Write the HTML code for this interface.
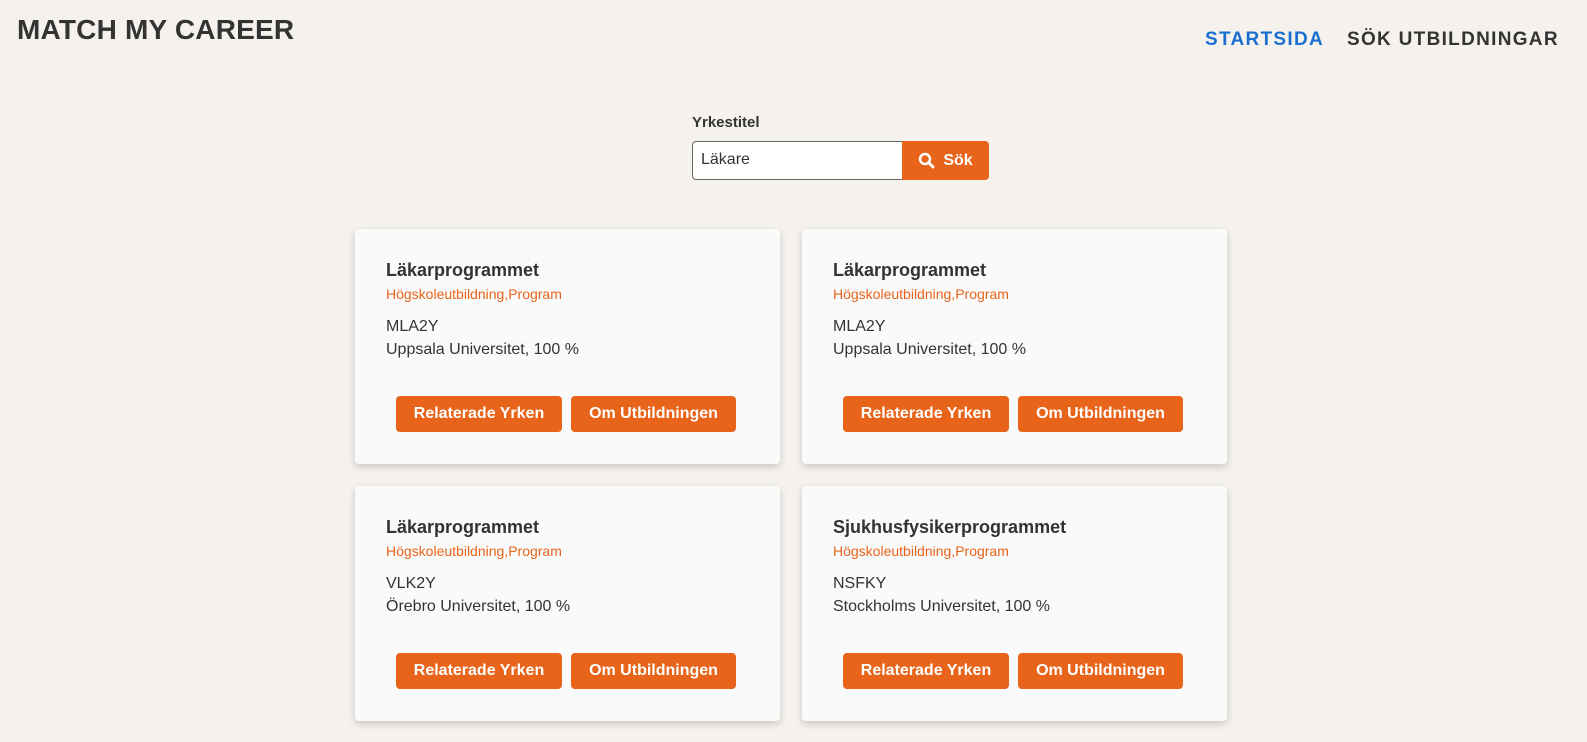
<!DOCTYPE html>
<html><head><meta charset="utf-8"><style>
*{box-sizing:border-box;margin:0;padding:0}
body{width:1587px;height:742px;background:#f5f2ee;font-family:"Liberation Sans",sans-serif;color:#333;position:relative;overflow:hidden}
.logo{position:absolute;left:17px;top:14px;font-size:28px;font-weight:bold;letter-spacing:0.2px;color:#333}
.nav{position:absolute;top:29px;font-size:19px;font-weight:bold;letter-spacing:1.3px}
.lbl{position:absolute;left:692px;top:114px;font-size:15px;font-weight:bold;color:#333}
.inp{position:absolute;left:692px;top:141px;width:211px;height:39px;border:1px solid #666;border-radius:4px 0 0 4px;background:#fff;font-size:16px;padding:9px 8px}
.sb{position:absolute;left:902px;top:141px;width:87px;height:39px;background:#e8641a;border-radius:0 4px 4px 0;color:#fff;font-weight:bold;font-size:16px;display:flex;align-items:center;justify-content:center;gap:8px}
.card{position:absolute;width:425px;height:235px;background:#fafafa;border-radius:4px;box-shadow:0 3px 8px rgba(0,0,0,.18)}
.t{position:absolute;left:31px;top:31px;font-size:18px;font-weight:bold;color:#333}
.s{position:absolute;left:31px;top:57px;font-size:14px;color:#e8641a}
.c{position:absolute;left:31px;top:86px;font-size:16px;line-height:23px;color:#333}
.b{position:absolute;top:167px;height:36px;background:#e8641a;color:#fff;border-radius:4px;font-weight:bold;font-size:16px;display:flex;align-items:center;justify-content:center}
</style></head><body>
<div class="logo">MATCH MY CAREER</div>
<div class="nav" style="left:1205px;color:#1a6fd0">STARTSIDA</div>
<div class="nav" style="left:1347px;color:#333">SÖK UTBILDNINGAR</div>
<div class="lbl">Yrkestitel</div>
<div class="inp">Läkare</div>
<div class="sb"><svg width="17" height="17" viewBox="0 0 17 17"><circle cx="7" cy="7" r="5" fill="none" stroke="#fff" stroke-width="2.5"/><path d="M10.5 10.5L15 15" stroke="#fff" stroke-width="3" stroke-linecap="round"/></svg>Sök</div>

<div class="card" style="left:355px;top:229px"><div class="t">Läkarprogrammet</div><div class="s">Högskoleutbildning,Program</div><div class="c">MLA2Y<br>Uppsala Universitet, 100 %</div><div class="b" style="left:41px;width:166px">Relaterade Yrken</div><div class="b" style="left:216px;width:165px">Om Utbildningen</div></div>
<div class="card" style="left:802px;top:229px"><div class="t">Läkarprogrammet</div><div class="s">Högskoleutbildning,Program</div><div class="c">MLA2Y<br>Uppsala Universitet, 100 %</div><div class="b" style="left:41px;width:166px">Relaterade Yrken</div><div class="b" style="left:216px;width:165px">Om Utbildningen</div></div>
<div class="card" style="left:355px;top:486px"><div class="t">Läkarprogrammet</div><div class="s">Högskoleutbildning,Program</div><div class="c">VLK2Y<br>Örebro Universitet, 100 %</div><div class="b" style="left:41px;width:166px">Relaterade Yrken</div><div class="b" style="left:216px;width:165px">Om Utbildningen</div></div>
<div class="card" style="left:802px;top:486px"><div class="t">Sjukhusfysikerprogrammet</div><div class="s">Högskoleutbildning,Program</div><div class="c">NSFKY<br>Stockholms Universitet, 100 %</div><div class="b" style="left:41px;width:166px">Relaterade Yrken</div><div class="b" style="left:216px;width:165px">Om Utbildningen</div></div>
</body></html>
